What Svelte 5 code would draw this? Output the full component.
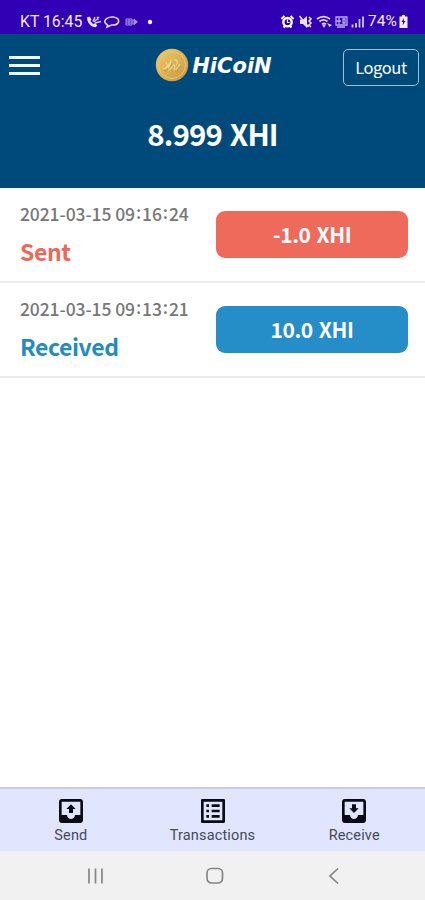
<script lang="ts">
    type Transaction = {
        date: string;
        time: string;
        kind: "Sent" | "Received";
        amount: string;
    };

    let balance = "8.999 XHI";

    let transactions: Transaction[] = [
        { date: "2021-03-15", time: "09:16:24", kind: "Sent", amount: "-1.0 XHI" },
        { date: "2021-03-15", time: "09:13:21", kind: "Received", amount: "10.0 XHI" },
    ];

    const tabs = [
        {
            label: "Send",
            icon: "M19 3H5c-1.1 0-2 .9-2 2v14c0 1.1.9 2 2 2h14c1.1 0 2-.9 2-2V5c0-1.1-.9-2-2-2zm0 12h-4c0 1.66-1.35 3-3 3s-3-1.34-3-3H5V5h14v10zM8.500 10.500h2v3h3v-3h2l-3.500-3.500z",
        },
        {
            label: "Transactions",
            icon: "M19 5v14H5V5h14m1.1-2H3.9c-.5 0-.9.4-.9.9v16.2c0 .4.4.9.9.9h16.2c.4 0 .9-.5.9-.9V3.9c0-.5-.5-.9-.9-.9zM11 7h6v2h-6zm0 4h6v2h-6zm0 4h6v2h-6zM7 7h2v2H7zm0 4h2v2H7zm0 4h2v2H7z",
        },
        {
            label: "Receive",
            icon: "M19 3H5c-1.1 0-2 .9-2 2v14c0 1.1.9 2 2 2h14c1.1 0 2-.9 2-2V5c0-1.1-.9-2-2-2zm0 12h-4c0 1.66-1.35 3-3 3s-3-1.34-3-3H5V5h14v10zM15.500 10h-2V7h-3v3h-2l3.500 3.500z",
        },
    ];
</script>

<div class="screen">
    <div class="status">
        <span class="carrier">KT 16:45</span>
        <svg class="notices" width="70" height="16" viewBox="0 0 70 16">
            <!-- call -->
            <path d="M0 3.500l2.500-1 2 3-1.200 1.500 2.800 3L8 9.300l2.300 2-1.500 2C4 13.500 0 8.500 0 3.500z" fill="#e9e2ff" />
            <path d="M6 7.500l2-4.500M7 8l5-5M8 9l6-1.500M10 3l1.500 2.500" stroke="#d6cbff" stroke-width="1.5" fill="none" />
            <!-- chat -->
            <path d="M20.500 11c-6.500-4 0-8.500 5.500-8 8.500 1 7 8.300-1.500 8l-4.500 2z" stroke="#e0d8ff" stroke-width="1.600" fill="none" />
            <!-- cast -->
            <path d="M39 5h6v6h-6zM39 7h6M39 9h6M42 5v6M46 6h2v4h-2z" stroke="#a891ed" stroke-width="1" fill="none" />
            <path d="M47 4.500l4 3.500-4 3z" fill="#a891ed" />
            <circle cx="63" cy="8" r="2.200" fill="#f2edff" />
        </svg>
        <svg class="signals" width="84" height="16" viewBox="0 0 84 16">
            <!-- alarm -->
            <circle cx="6.500" cy="8.200" r="4.200" stroke="#fff" stroke-width="2.400" fill="none" />
            <path d="M.5 5l3-3M9.500 2l3 3M2.500 13.500l2-2M10.500 13.500l-2-2" stroke="#fff" stroke-width="2" fill="none" />
            <path d="M6.500 5.500v3h2" stroke="#fff" stroke-width="1.200" fill="none" />
            <!-- vibrate -->
            <path d="M19 5.500h3l4-3.500v12l-4-4h-3z" fill="#e9e2ff" />
            <path d="M18.500 2l9 11M28 3l2 2-2 2 2 2-2 2 2 2" stroke="#e6deff" stroke-width="1.600" fill="none" />
            <!-- wifi -->
            <path d="M36 5c4-3 9-3 13 0M38.500 7.500c2.500-2 5.500-2 8 0M41 10c1.500-1 2.500-1 4 0" stroke="#ddd3ff" stroke-width="1.800" fill="none" />
            <path d="M41 10.500h4l-2 3.500zM46 9l2.500 4 2.500-2M46 13h2" fill="#ddd3ff" />
            <!-- volte -->
            <path d="M55 3h11v8H55zM55 7h5M58 4v6M62 5h2v4h-2zM56 13h8" stroke="#bcaaf5" stroke-width="1.300" fill="none" />
            <path d="M71.500 13.500v-3M75 13.500V9" stroke="#ddd3ff" stroke-width="1.800" />
            <path d="M78.500 13.500V5M82 13.500V2.500" stroke="#ddd3ff" stroke-width="1.700" />
        </svg>
        <span class="percent">74%</span>
        <svg class="battery" width="9" height="13" viewBox="0 0 9 13">
            <path d="M3 0h3v1.500h2.500V13h-8V1.500H3z" fill="#f1edff" />
            <path d="M5 3L2.500 7h1.700L3.500 10.500 6.500 6H4.800z" fill="#3100ac" />
        </svg>
    </div>

    <header>
        <div class="bar">
            <button class="menu" aria-label="Menu">
                <i></i>
                <i></i>
                <i></i>
            </button>
            <div class="brand">
                <svg width="34" height="34" viewBox="0 0 34 34">
                    <defs>
                        <linearGradient id="gold" x1="0" y1="0" x2="1" y2="1">
                            <stop offset="0" stop-color="#ecca6c" />
                            <stop offset="0.5" stop-color="#dcb153" />
                            <stop offset="1" stop-color="#c4953e" />
                        </linearGradient>
                    </defs>
                    <circle cx="17" cy="17" r="16.2" fill="url(#gold)" />
                    <circle cx="17" cy="17" r="13.5" fill="none" stroke="#e6c878" stroke-width="1" />
                    <path d="M8 21c4-1 7-5 8-9 1 4-4 7-2 10 2-1 3-5 5-5s-1 5 1 5 3-4 5-6M19 12c4-1 4 3 2 5M11 14l2 5" fill="none" stroke="#f1dc98" stroke-width="1.1" />
                    <path d="M9 23c4 0 7-4 8-8M20 23c3 0 4-3 6-5" fill="none" stroke="#b98a32" stroke-width="0.7" />
                </svg>
                <span>HiCoiN</span>
            </div>
            <button class="logout">Logout</button>
        </div>
        <div class="balance">{balance}</div>
    </header>

    <main>
        {#each transactions as tx}
            <div class="row" class:sent={tx.kind == "Sent"}>
                <div class="info">
                    <div class="date">
                        {tx.date}
                        {#each tx.time.split(":") as part, i}{#if i > 0}<span class="colon">:</span>{/if}{part}{/each}
                    </div>
                    <div class="kind">{tx.kind}</div>
                </div>
                <div class="amount">{tx.amount}</div>
            </div>
        {/each}
    </main>

    <nav>
        {#each tabs as tab}
            <div class="tab">
                <svg width="24" height="24" viewBox="3 3 18 18">
                    <path d={tab.icon} />
                </svg>
                <span>{tab.label}</span>
            </div>
        {/each}
    </nav>

    <div class="system">
        <svg width="18" height="18" viewBox="0 0 18 18">
            <path d="M2 1.500v15M8.500 1.500v15M15 1.500v15" />
        </svg>
        <svg width="18" height="18" viewBox="0 0 18 18">
            <rect x="1" y="1.500" width="15.500" height="14.500" rx="4.500" />
        </svg>
        <svg width="18" height="18" viewBox="0 0 18 18">
            <path d="M13 1.500L5 9l8 7.500" />
        </svg>
    </div>
</div>

<style>
    :global(body) {
        margin: 0;
    }

    .screen {
        display: flex;
        flex-direction: column;
        width: 425px;
        height: 900px;
        overflow: hidden;
        background: #fff;
        font-family: "Noto Sans CJK KR", sans-serif;
    }

    .status {
        display: flex;
        align-items: center;
        box-sizing: border-box;
        height: 34px;
        padding: 9px 17px 0 20px;
        background: #3100b4;
        color: #efeaff;
        font-family: Roboto, sans-serif;
        font-size: 15.8px;
        line-height: 25px;
        white-space: nowrap;
    }

    .carrier {
        width: 67px;
    }

    .signals {
        margin-left: auto;
    }

    .percent {
        width: 30px;
        margin-left: 3px;
        font-size: 15.5px;
    }

    .battery {
        margin-left: 1px;
    }

    header {
        height: 154px;
        background: #004a7b;
        color: #fff;
    }

    .bar {
        display: flex;
        align-items: center;
        justify-content: space-between;
        height: 62px;
        padding: 0 6px 0 9px;
    }

    button {
        padding: 0;
        border: 0;
        background: none;
        color: inherit;
        font-family: inherit;
    }

    .menu {
        display: flex;
        flex-direction: column;
        gap: 5px;
        width: 31px;
        margin-right: 44px;
    }

    .menu i {
        height: 3px;
        background: #f4f8fa;
    }

    .brand {
        display: flex;
        align-items: center;
        gap: 3px;
    }

    .brand span {
        padding-top: 1px;
        font: italic bold 21px/30px "DejaVu Sans", sans-serif;
    }

    .logout {
        box-sizing: border-box;
        width: 76px;
        height: 37px;
        margin-top: 4px;
        border: 1px solid #9fc0d4;
        border-radius: 5px;
        font-size: 16.5px;
        letter-spacing: -0.4px;
        line-height: 33px;
    }

    .balance {
        margin-top: 15px;
        font-size: 29.5px;
        font-weight: bold;
        letter-spacing: -0.9px;
        line-height: 44px;
        text-align: center;
        word-spacing: 2px;
    }

    .row {
        display: flex;
        align-items: center;
        justify-content: space-between;
        box-sizing: border-box;
        height: 95px;
        padding: 0 17px 0 20px;
        border-bottom: 2px solid #ebebeb;
    }

    .date {
        margin-top: -2px;
        color: #777;
        font-size: 17.5px;
        font-weight: 500;
        letter-spacing: -0.1px;
        line-height: 30px;
        white-space: nowrap;
    }

    .colon {
        padding: 0 1px;
        line-height: 1;
        vertical-align: 2px;
    }

    .kind {
        margin-top: 4px;
        color: #228bc5;
        font-size: 23px;
        font-weight: bold;
        letter-spacing: -0.4px;
        line-height: 36px;
    }

    .amount {
        width: 192px;
        height: 47px;
        border-radius: 9px;
        background: #258dc7;
        color: #fff;
        font-size: 21px;
        font-weight: bold;
        letter-spacing: -0.4px;
        line-height: 47px;
        text-align: center;
        word-spacing: 1.5px;
    }

    .sent .kind {
        color: #ed6856;
    }

    .sent .amount {
        background: #f06a5b;
    }

    nav {
        display: flex;
        box-sizing: border-box;
        height: 64px;
        margin-top: auto;
        border-top: 2px solid #c9cddd;
        background: #e1e6fe;
    }

    .tab {
        display: flex;
        flex: 1;
        flex-direction: column;
        align-items: center;
        padding-top: 10px;
        color: #454a58;
        font-family: Roboto, sans-serif;
        font-size: 14.5px;
        letter-spacing: 0.15px;
        line-height: 25px;
    }

    .tab svg {
        fill: #080b17;
    }

    .system {
        display: flex;
        align-items: center;
        justify-content: space-between;
        box-sizing: border-box;
        height: 49px;
        padding: 1px 82px 0 87px;
        background: #f1f1f1;
    }

    .system svg {
        fill: none;
        stroke: #858585;
        stroke-width: 1.7;
    }
</style>
